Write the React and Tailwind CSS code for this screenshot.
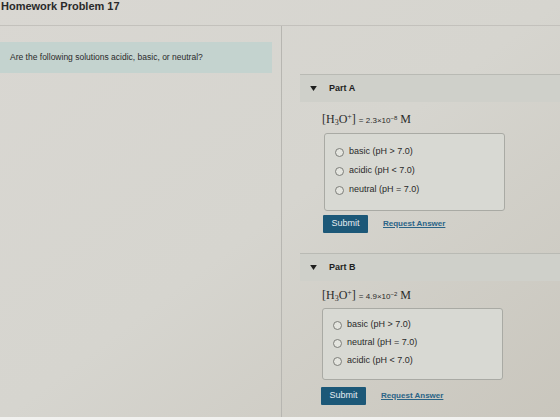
import React from 'react';

const parts = [
  {
    label: 'Part A',
    mant: '2.3',
    exp: '−8',
    options: ['basic (pH > 7.0)', 'acidic (pH < 7.0)', 'neutral (pH = 7.0)'],
  },
  {
    label: 'Part B',
    mant: '4.9',
    exp: '−2',
    options: ['basic (pH > 7.0)', 'neutral (pH = 7.0)', 'acidic (pH < 7.0)'],
  },
];

function Formula({ mant, exp }) {
  return (
    <div className="flex items-baseline pl-[22px] text-[#2b2b2b]">
      <span className="font-['Liberation_Serif',serif] text-[12px]">
        [H<sub className="text-[8px]">3</sub>O<sup className="text-[8px]">+</sup>]
      </span>
      <span className="ml-[3px] text-[8px]">
        = {mant}×10<sup className="text-[6px]">{exp}</sup>
      </span>
      <span className="ml-[3px] font-['Liberation_Serif',serif] text-[12px]">M</span>
    </div>
  );
}

function Part({ part, first }) {
  return (
    <section className={first ? 'mt-[48px]' : 'mt-[20px]'}>
      <div className="ml-[18px] flex h-[28px] items-center gap-[12px] border-t border-[#b9bab4] bg-[#cfd0ca] pl-[10px]">
        <svg viewBox="0 0 8 6" className="h-[5px] w-[7px] fill-[#1e1e1e]">
          <path d="M0 0h8L4 6z" />
        </svg>
        <span className="text-[9px] font-bold text-[#1e1e1e]">{part.label}</span>
      </div>
      <div className={`pl-[18px] ${first ? 'pt-[8px]' : 'pt-[5px]'}`}>
        <Formula mant={part.mant} exp={part.exp} />
        <div
          className={`flex w-[181px] flex-col rounded-[3px] border border-[#a9aaa4] bg-[#d8d9d3] pl-[10px] ${
            first ? 'mt-[5px] ml-[24px] gap-[7px] pt-[12px] pb-[14px]' : 'mt-[4px] ml-[22px] gap-[6px] pt-[10px] pb-[12px]'
          }`}
        >
          {part.options.map((o) => (
            <label key={o} className="flex h-[12px] items-center gap-[5px] text-[9px] text-[#2a2a2a]">
              <span className="h-[9px] w-[9px] rounded-full border border-[#7d7e79] bg-[#e4e5df]" />
              {o}
            </label>
          ))}
        </div>
        <div className={`flex items-center gap-[15px] ${first ? 'mt-[4px] ml-[23px]' : 'mt-[7px] ml-[21px]'}`}>
          <button type="button" className="h-[18px] w-[45px] rounded-[1px] bg-[#1c5878] text-[9px] text-[#e6eef2]">
            Submit
          </button>
          <span className="text-[8px] font-bold text-[#2a6487] underline">Request Answer</span>
        </div>
      </div>
    </section>
  );
}

export default function App() {
  return (
    <div className="flex h-[420px] w-[560px] flex-col overflow-hidden bg-gradient-to-br from-[#d9d7d2] via-[#d6d5cf] to-[#c9c6bd] font-['Liberation_Sans',Arial,sans-serif]">
      <div className="h-[26px] shrink-0 overflow-hidden border-b border-[#c3c1bc] pl-[1px]">
        <h1 className="-mt-[1px] text-[11px] leading-[14px] font-bold text-[#2a2a2a]">Homework Problem 17</h1>
      </div>
      <div className="flex flex-1">
        <div className="w-[282px] shrink-0 border-r border-[#b7b6b1] pt-[16px]">
          <div className="flex h-[31px] w-[272px] items-center bg-[#c4d3cf] pl-[10px] text-[8.5px] text-[#2a2a2a]">
            Are the following solutions acidic, basic, or neutral?
          </div>
        </div>
        <div className="flex-1">
          {parts.map((p, i) => (
            <Part key={p.label} part={p} first={i === 0} />
          ))}
        </div>
      </div>
      <div className="h-[3px] shrink-0 bg-[#f2f2f0]" />
    </div>
  );
}
